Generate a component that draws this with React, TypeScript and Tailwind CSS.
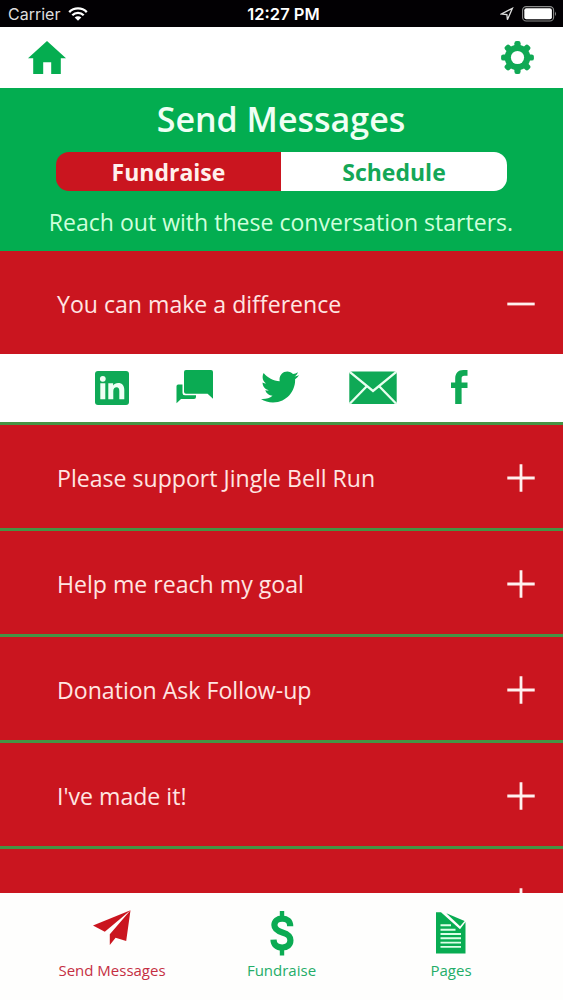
import { useState } from "react";
import { FaTwitter } from "react-icons/fa";

function WifiIcon() {
  return (
    <svg width="20" height="14" viewBox="0 0 20 14" fill="none" stroke="#fff" strokeWidth="2.3">
      <path d="M1.2 5.1a12.4 12.4 0 0 1 17.6 0" />
      <path d="M4.3 8.2a8 8 0 0 1 11.4 0" />
      <path d="M10 13.8 6.7 10.5a4.7 4.7 0 0 1 6.6 0z" fill="#fff" stroke="none" />
    </svg>
  );
}

function LocationIcon() {
  return (
    <svg width="14" height="14" viewBox="0 0 14 14" fill="none" stroke="#ddd" strokeWidth="1.3">
      <path d="M12.400 1.300 1.500 7l5.400.500.500 5.300z" />
    </svg>
  );
}

function BatteryIcon() {
  return (
    <svg width="35" height="16" viewBox="0 0 35 16">
      <rect x="0.6" y="0.6" width="31" height="14.4" rx="3.6" fill="none" stroke="#8c8c8c" strokeWidth="1.1" />
      <rect x="2.3" y="2.3" width="27.6" height="11" rx="2" fill="#fff" />
      <path d="M33 5.5q2 2.3 0 4.6z" fill="#8c8c8c" />
    </svg>
  );
}

function HomeIcon() {
  return (
    <svg width="38" height="33" viewBox="0 0 38 33" fill="#05ad50">
      <path d="M19 0 38 17.3h-5.2V33H23.2V21.3h-8V33H5.2V17.3H0z" />
    </svg>
  );
}

function GearIcon() {
  return (
    <svg width="33" height="33" viewBox="-16.5 -16.5 33 33" fill="#10a955">
      {[0, 45, 90, 135].map((a) => (
        <rect key={a} x="-3.1" y="-16.4" width="6.2" height="32.8" rx="2.2" transform={`rotate(${a})`} />
      ))}
      <circle r="12.8" />
      <circle r="6.6" fill="#fff" />
    </svg>
  );
}

function LinkedInIcon() {
  return (
    <svg width="34" height="34" viewBox="0 0 34 34">
      <rect width="34" height="34" rx="3" fill="#0fa956" />
      <g fill="#effff5">
        <circle cx="7.8" cy="7.800" r="2.900" />
        <path d="M5.300 12.300h5v16h-5zM13.300 12.300h4.800v2.200c1-1.700 2.800-2.600 5-2.600 4.300 0 6.200 2.700 6.200 7.200v9.200h-5v-8.300c0-2.400-.8-3.700-2.700-3.700-2.100 0-3.300 1.500-3.300 3.900v8.100h-5z" />
      </g>
    </svg>
  );
}

function ChatIcon() {
  return (
    <svg width="38" height="34" viewBox="0 0 38 34" fill="#0bab53">
      <path d="M10 0h25a2 2 0 0 1 2 2v26.800l-5.400-5H10a2 2 0 0 1-2-2V2a2 2 0 0 1 2-2z" />
      <path d="M2.200 14.500h4.300V22.900a2.400 2.400 0 0 0 2.400 2.400H20V27a2 2 0 0 1-2 2H5L.5 33.200V16.200a1.700 1.700 0 0 1 1.700-1.700z" />
    </svg>
  );
}

function MailIcon() {
  return (
    <svg width="48" height="34" viewBox="0 0 48 34">
      <rect x="0.300" y="0.500" width="47.400" height="32.500" rx="2.500" fill="#0fa956" />
      <path d="M1 1.200 24 20 47 1.200M1 32.500 17.800 15.300M47 32.500 30.200 15.300" fill="none" stroke="#e9fff0" strokeWidth="2.300" />
    </svg>
  );
}

function FacebookIcon() {
  return (
    <svg width="17" height="34" viewBox="0 0 17 34" fill="#10a955">
      <path d="M4.200 34V18H0v-5.600h4.200V8.600C4.200 3 7.200 0 12.300 0H16.500v5.700h-3.200c-2 0-2.700.900-2.700 2.700v4h5.900V18h-5.900v16z" />
    </svg>
  );
}

function PlaneIcon() {
  return (
    <svg width="38" height="36" viewBox="0 0 38 36" fill="#ca151f">
      <path d="M37.500.300 0 15.500 11.800 21.800z" />
      <path d="M37.500.300 16.800 24.200V35l5.800-7.200 10.600 3.100z" />
    </svg>
  );
}

function DollarIcon() {
  return (
    <svg width="26" height="45" viewBox="0 0 26 45" fill="none" stroke="#0bab53">
      <path d="M13 0v8M13 36v8.500" strokeWidth="4.400" />
      <path d="M21.200 15.200C21.200 10 18.200 7.600 13.200 7.600c-4.700 0-7.800 2.500-7.800 6.500 0 4.300 3.200 5.900 8 7.300 4.900 1.500 8 3.100 8 7.900 0 4.500-3.200 7.200-8.200 7.200-5.400 0-8.600-2.900-8.700-7.900" strokeWidth="6.200" />
    </svg>
  );
}

function PagesIcon() {
  return (
    <svg width="30" height="42" viewBox="0 0 30 42">
      <path d="M0 .300h5L24 17.200 29.500 10v31.500H0z" fill="#08ac52" />
      <path d="M10.300 1.300 28.600 9l-4.500 5.200z" fill="#08ac52" />
      <path d="M4.500 13.200h10.500M4.500 17.700h15M4.500 22h20.500M4.500 26.300h20.500M4.500 30.600h20.500M4.500 34.900h20.500" stroke="#dcffe8" strokeWidth="1.900" />
    </svg>
  );
}

function ToggleIcon({ open }: { open: boolean }) {
  return (
    <svg width="28" height="28" viewBox="0 0 28 28" stroke="#fff0ee" strokeWidth="2.800">
      <path d={open ? "M.3 14h27.400" : "M.3 14h27.400M14 .3v27.400"} />
    </svg>
  );
}

const messages = [
  "You can make a difference",
  "Please support Jingle Bell Run",
  "Help me reach my goal",
  "Donation Ask Follow-up",
  "I've made it!",
  "",
];

function ShareRow() {
  return (
    <div className="flex h-[68px] items-start bg-white pt-4 pl-[95px]">
      <button className="mt-px w-[81px]"><LinkedInIcon /></button>
      <button className="w-[85px]"><ChatIcon /></button>
      <button className="mt-[-2px] w-[88px]"><FaTwitter className="size-[38px] text-[#0bab53]" /></button>
      <button className="mt-px w-[102px]"><MailIcon /></button>
      <button><FacebookIcon /></button>
    </div>
  );
}

export default function App() {
  const [open, setOpen] = useState(0);
  return (
    <div className="flex h-[1000px] w-[563px] flex-col overflow-hidden bg-white font-['Open_Sans',sans-serif]">
      <div className="grid h-[27px] shrink-0 grid-cols-3 items-center bg-[#020003] font-['Inter',sans-serif] text-[16px] text-white">
        <div className="flex items-center gap-2 pl-2">
          <span className="text-[#dedede]">Carrier</span>
          <WifiIcon />
        </div>
        <span className="pt-0.5 pl-1 text-center text-[16.500px] font-semibold whitespace-nowrap">12:27 PM</span>
        <div className="flex items-center justify-end gap-[8px] pr-[6px]">
          <LocationIcon />
          <BatteryIcon />
        </div>
      </div>

      <header className="flex h-[61px] shrink-0 items-center justify-between pr-[29px] pl-7">
        <button><HomeIcon /></button>
        <button><GearIcon /></button>
      </header>

      <section className="flex h-[163px] shrink-0 flex-col items-center bg-[#03ad50]">
        <h1 className="mt-[7px] mr-px h-[57px] text-[34px] leading-[48px] font-semibold whitespace-nowrap text-[#effff4]">Send Messages</h1>
        <div className="flex h-[39px] w-[451px] overflow-hidden rounded-[13px] text-[23px] leading-[41px] font-bold">
          <button className="w-[225px] bg-[#ca151f] text-[#fff0ec]">Fundraise</button>
          <button className="w-[226px] bg-white text-[#14a757]">Schedule</button>
        </div>
        <p className="mt-[15px] mr-px text-[23.050px] leading-[32px] whitespace-nowrap text-[#cfffdc]">Reach out with these conversation starters.</p>
      </section>

      <main className="min-h-0 flex-1 overflow-hidden bg-[#ca151f]">
        {messages.map((text, i) => (
          <div key={i} className="border-b-3 border-[#469344]">
            <button onClick={() => setOpen(open === i ? -1 : i)} className="flex h-[103px] w-full items-center justify-between pt-[3px] pr-7 pl-[57px] text-[23.100px] text-[#ffe5e2]">
              <span>{text}</span>
              <ToggleIcon open={open === i} />
            </button>
            {open === i && <ShareRow />}
          </div>
        ))}
      </main>

      <nav className="flex h-[107px] shrink-0 justify-center bg-[#fefefd] text-[15px] leading-[20px]">
        <button className="flex w-[169.500px] flex-col items-center text-[#c52f43]">
          <span className="flex h-[67px] items-start pt-[17px]"><PlaneIcon /></span>
          Send Messages
        </button>
        <button className="flex w-[169.500px] flex-col items-center text-[#24ad68]">
          <span className="flex h-[67px] items-start pt-[18px]"><DollarIcon /></span>
          Fundraise
        </button>
        <button className="flex w-[169.500px] flex-col items-center text-[#24ad68]">
          <span className="flex h-[67px] items-start pt-[19px]"><PagesIcon /></span>
          Pages
        </button>
      </nav>
    </div>
  );
}
